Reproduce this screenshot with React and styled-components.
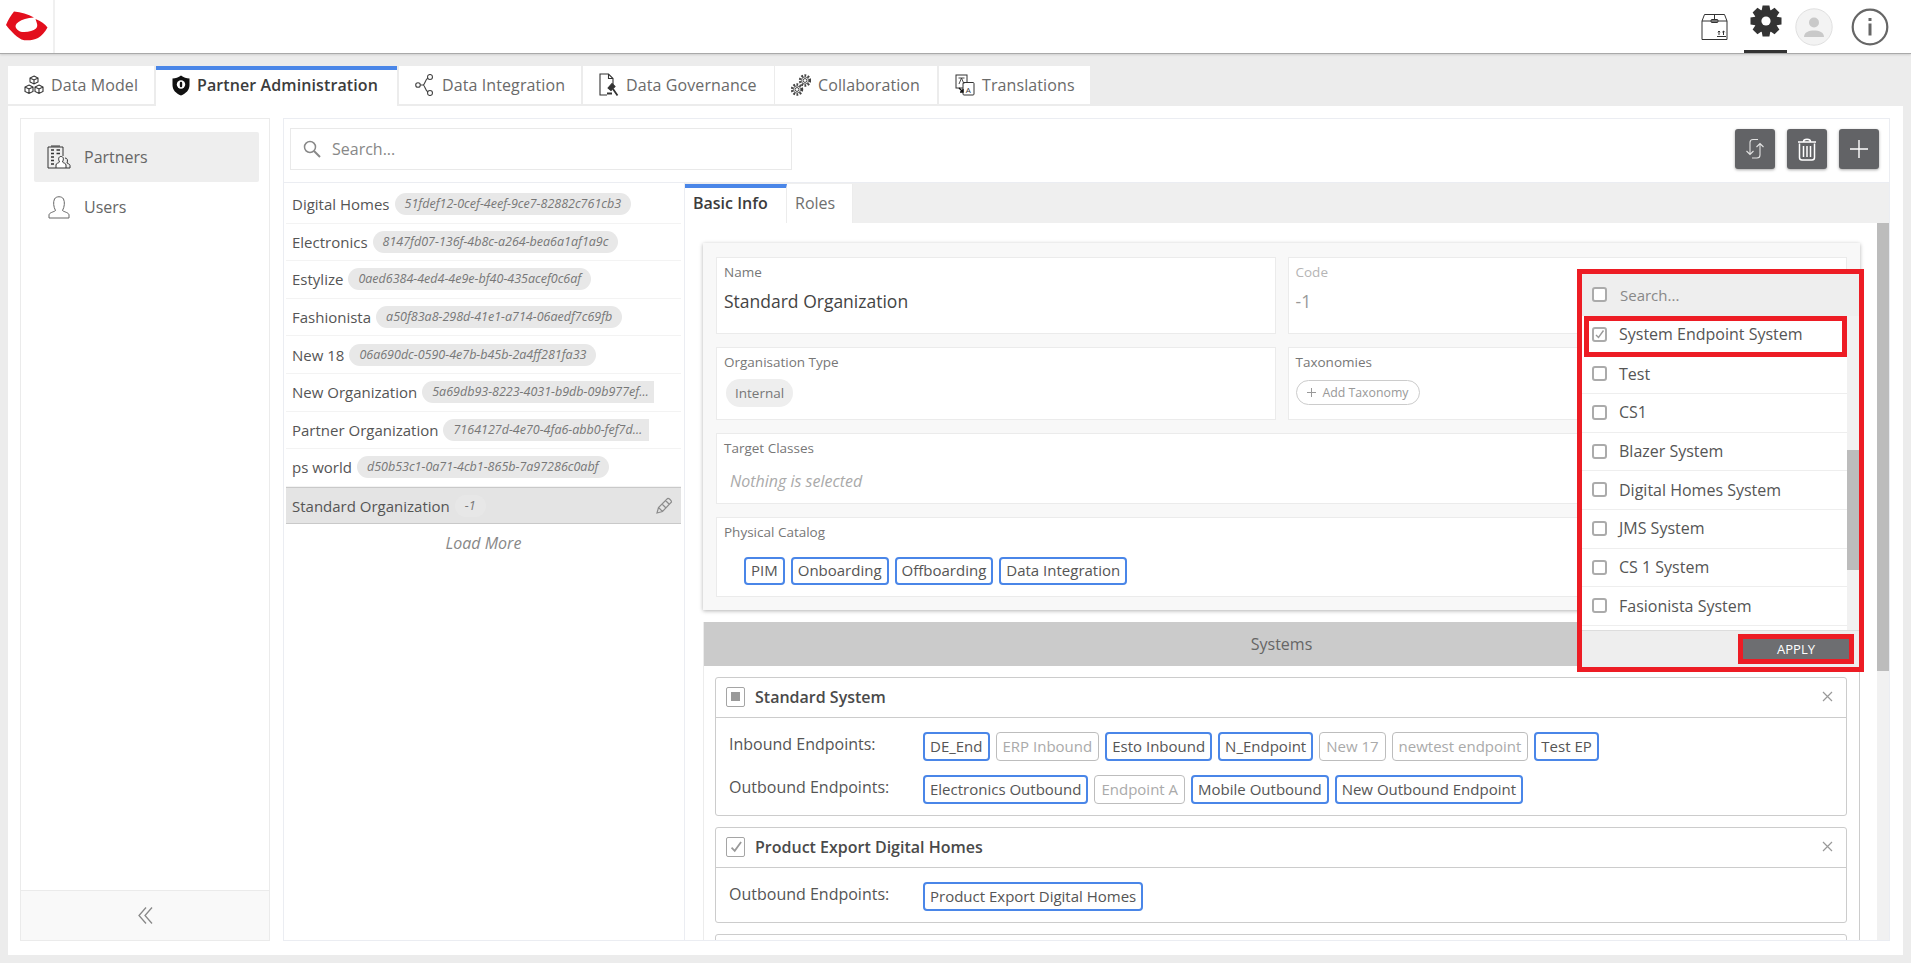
import React from "react";
import styled, { createGlobalStyle } from "styled-components";

const GlobalStyle = createGlobalStyle`
  html, body {
    margin: 0;
    padding: 0;
    background: #ececec;
    font-family: "Open Sans", "Liberation Sans", sans-serif;
    color: #555;
  }
  * { box-sizing: border-box; }
`;

const Page = styled.div`
  width: 1911px;
  height: 963px;
  overflow: hidden;
  display: flex;
  flex-direction: column;
`;

const TopBar = styled.header`
  height: 54px;
  flex: none;
  background: #fff;
  border-bottom: 1px solid #a9a9a9;
  box-shadow: 0 1px 2px rgba(0, 0, 0, 0.12);
  display: flex;
  align-items: stretch;
  padding-right: 22px;
`;

const LogoCell = styled.div`
  width: 55px;
  border-right: 2px solid #f0f0f0;
  display: flex;
  align-items: center;
`;

const TopIcons = styled.div`
  margin-left: auto;
  display: flex;
  align-items: center;
`;

const TopIcon = styled.div`
  margin-left: ${(p) => p.$ml || 0}px;
  display: flex;
  align-items: center;
  justify-content: center;
`;

const GearCell = styled(TopIcon)`
  width: 43px;
  height: 53px;
  padding-bottom: 8px;
  border-bottom: 3px solid #333;
`;

const TabStrip = styled.nav`
  display: flex;
  align-items: flex-start;
  height: 40px;
  margin-top: 12px;
  padding-left: 8px;
  flex: none;
`;

const Tab = styled.div`
  height: ${(p) => (p.$active ? 40 : 38)}px;
  width: ${(p) => p.$w}px;
  margin-right: ${(p) => p.$mr ?? 2}px;
  background: #fff;
  border-top: ${(p) => (p.$active ? "4px solid #4a86e8" : "none")};
  display: flex;
  align-items: center;
  gap: 7px;
  padding-left: 16px;
  padding-bottom: ${(p) => (p.$active ? 6 : 0)}px;
  font-size: 16px;
  letter-spacing: 0.1px;
  font-weight: ${(p) => (p.$active ? 600 : 400)};
  color: ${(p) => (p.$active ? "#3c3c3c" : "#6a6a6a")};
  white-space: nowrap;
`;

const Panel = styled.div`
  flex: 1;
  margin: 0 8px 8px;
  background: #fff;
  padding: 12px 13px 14px 12px;
  display: flex;
  gap: 13px;
  min-height: 0;
`;

const Sidebar = styled.aside`
  width: 250px;
  flex: none;
  border: 1px solid #ebebeb;
  display: flex;
  flex-direction: column;
`;

const SideNav = styled.div`
  flex: 1;
  padding: 13px 10px 0 13px;
`;

const SideItem = styled.div`
  height: 50px;
  display: flex;
  align-items: center;
  gap: 13px;
  padding-left: 13px;
  background: ${(p) => (p.$active ? "#eeeeee" : "transparent")};
  border-radius: 2px;
  font-size: 16px;
  color: #666;
`;

const SideIconBox = styled.span`
  width: 24px;
  display: flex;
  justify-content: center;
`;

const SideFoot = styled.div`
  height: 50px;
  background: #f9f9f9;
  border-top: 1px solid #ebebeb;
  display: flex;
  align-items: center;
  justify-content: center;
`;

const Main = styled.main`
  flex: 1;
  min-width: 0;
  border: 1px solid #ebedf2;
  display: flex;
  flex-direction: column;
`;

const Toolbar = styled.div`
  height: 64px;
  flex: none;
  display: flex;
  align-items: center;
  padding: 0 10px 3px 6px;
  border-bottom: 1px solid #ebedf2;
`;

const SearchBox = styled.div`
  width: 502px;
  height: 42px;
  border: 1px solid #e9e9e9;
  display: flex;
  align-items: center;
  gap: 11px;
  padding-left: 12px;
  font-size: 16px;
  color: #888;
`;

const ToolButtons = styled.div`
  margin-left: auto;
  display: flex;
  gap: 12px;
`;

const ToolButton = styled.div`
  width: 40px;
  height: 40px;
  background: #626366;
  border-radius: 3px;
  box-shadow: 0 1px 3px rgba(0, 0, 0, 0.35);
  display: flex;
  align-items: center;
  justify-content: center;
`;

const Body = styled.div`
  flex: 1;
  min-height: 0;
  display: flex;
`;

const ListCol = styled.div`
  width: 401px;
  flex: none;
  padding: 3px 3px 0 2px;
  border-right: 1px solid #ebedf2;
`;

const Row = styled.div`
  height: 37.6px;
  display: flex;
  align-items: center;
  gap: 5px;
  padding-left: 6px;
  padding-right: 8px;
  font-size: 15px;
  color: #555;
  white-space: nowrap;
  border-bottom: 1px solid #f3f3f3;
  background: ${(p) => (p.$active ? "#e4e4e4" : "#fff")};
  border-top: ${(p) => (p.$active ? "1px solid #c9c9c9" : "none")};
  border-bottom-color: ${(p) => (p.$active ? "#c9c9c9" : "#f3f3f3")};
`;

const IdPill = styled.span`
  max-width: ${(p) => p.$max || 400}px;
  height: 22px;
  line-height: 22px;
  padding: 0 ${(p) => (p.$cut ? 2 : 10)}px 0 10px;
  background: ${(p) => (p.$plain ? "#e7e7e7" : "#e8e8e8")};
  border-radius: ${(p) => (p.$cut ? "11px 0 0 11px" : "11px")};
  font-size: 12.5px;
  font-style: italic;
  color: #777;
  overflow: hidden;
  text-overflow: ellipsis;
`;

const EditIcon = styled.span`
  margin-left: auto;
  display: flex;
`;

const LoadMore = styled.div`
  text-align: center;
  font-size: 16px;
  font-style: italic;
  color: #888;
  padding-top: 8px;
`;

const Detail = styled.div`
  flex: 1;
  min-width: 0;
  position: relative;
  display: flex;
  flex-direction: column;
`;

const DetailTabs = styled.div`
  height: 40px;
  flex: none;
  background: #efefef;
  display: flex;
  align-items: flex-start;
  padding-top: 1px;
`;

const DetailTab = styled.div`
  height: 39px;
  background: #fff;
  border-top: ${(p) => (p.$active ? "4px solid #4a86e8" : "none")};
  border-right: 1px solid #ececec;
  width: ${(p) => p.$w}px;
  display: flex;
  align-items: center;
  padding-left: 8px;
  padding-bottom: ${(p) => (p.$active ? 6 : 2)}px;
  font-size: 16px;
  font-weight: ${(p) => (p.$active ? 600 : 400)};
  color: ${(p) => (p.$active ? "#3c3c3c" : "#6f6f6f")};
`;

const ScrollArea = styled.div`
  flex: 1;
  min-height: 0;
  display: flex;
  overflow: hidden;
`;

const Content = styled.div`
  flex: 1;
  min-width: 0;
  padding: 20px 17px 0 18px;
`;

const Track = styled.div`
  width: 12px;
  flex: none;
  background: #f1f1f1;
`;

const Thumb = styled.div`
  height: ${(p) => p.$h}px;
  margin-top: ${(p) => p.$top || 0}px;
  background: #bcbcbc;
`;

const InfoCard = styled.section`
  background: #f8f8f8;
  box-shadow: 0 1px 4px rgba(0, 0, 0, 0.3);
  padding: 14px 13px 13px;
  display: grid;
  grid-template-columns: 1fr 1fr;
  gap: 13px 12px;
`;

const Field = styled.div`
  height: ${(p) => p.$h}px;
  grid-column: ${(p) => (p.$wide ? "1 / 3" : "auto")};
  background: #fff;
  border: 1px solid #ebebeb;
  padding: 3.5px 7px 0;
`;

const FieldLabel = styled.div`
  font-size: 13.5px;
  line-height: 20px;
  color: ${(p) => (p.$muted ? "#b5b5b5" : "#777")};
`;

const FieldValue = styled.div`
  font-size: 17.5px;
  line-height: 24px;
  margin-top: 7px;
  color: ${(p) => (p.$muted ? "#999" : "#444")};
`;

const Placeholder = styled.div`
  font-size: 16px;
  line-height: 22px;
  font-style: italic;
  color: #aaa;
  margin: 12px 0 0 6px;
`;

const TypePill = styled.span`
  display: inline-flex;
  align-items: center;
  height: 28px;
  margin: 7px 0 0 2px;
  padding: 0 9px;
  background: #eeeeee;
  border-radius: 14px;
  font-size: 13.5px;
  color: #777;
`;

const AddPill = styled.span`
  display: inline-flex;
  align-items: center;
  gap: 6px;
  height: 25px;
  margin-top: 8px;
  padding: 0 11px 0 9px;
  border: 1px solid #ccc;
  border-radius: 13px;
  font-size: 12.3px;
  color: #999;
`;

const ChipRow = styled.div`
  display: flex;
  gap: 6px;
  padding-left: ${(p) => p.$pl || 0}px;
  margin-top: ${(p) => p.$mt || 0}px;
`;

const Chip = styled.span`
  height: ${(p) => p.$h || 29}px;
  display: flex;
  align-items: center;
  white-space: nowrap;
  border-radius: 4px;
  border: ${(p) => (p.$off ? "1px solid #bdbdbd" : "2px solid #4a86e8")};
  padding: 0 ${(p) => (p.$off ? 6 : 5)}px 1px;
  font-size: 15px;
  background: #fff;
  color: ${(p) => (p.$off ? "#aaa" : "#555")};
`;

const Systems = styled.section`
  margin-top: 12px;
  padding-bottom: 11px;
  background: #fff;
  border-right: 1px solid #ccc;
  border-left: 1px solid #ececec;
`;

const SystemsHead = styled.div`
  height: 44px;
  display: flex;
  align-items: center;
  justify-content: center;
  background: #cbcbcb;
  font-size: 16px;
  color: #666;
`;

const SystemCard = styled.div`
  margin: 11px 12px 0 11px;
  border: 1px solid #ccc;
  border-radius: 3px;
`;

const CardHead = styled.div`
  height: 40px;
  display: flex;
  align-items: center;
  gap: 10px;
  padding: 0 13px 2px 10px;
  border-bottom: 1px solid #ccc;
  font-size: 16px;
  font-weight: 600;
  color: #4a4a4a;
`;

const BoxIcon = styled.span`
  width: 19px;
  height: 20px;
  flex: none;
  border: 1px solid #a5a5a5;
  border-radius: 2px;
  display: flex;
  align-items: center;
  justify-content: center;
`;

const Solid = styled.span`
  width: 9px;
  height: 9px;
  background: #9a9a9a;
`;

const CloseMark = styled.span`
  margin-left: auto;
  display: flex;
`;

const CardBody = styled.div`
  padding: 14px 13px 11px;
  display: flex;
  flex-direction: column;
  gap: 14px;
`;

const EndpointRow = styled.div`
  display: flex;
  align-items: flex-start;
`;

const EndpointLabel = styled.div`
  width: 194px;
  flex: none;
  font-size: 16px;
  line-height: 24px;
  color: #555;
`;

const Picker = styled.div`
  position: absolute;
  left: 892px;
  top: 86px;
  width: 287px;
  height: 403px;
  border: 5px solid #ed1c24;
  background: #fff;
  display: flex;
  flex-direction: column;
  z-index: 2;
`;

const PickerSearch = styled.div`
  height: 42px;
  flex: none;
  background: #eeeeee;
  display: flex;
  align-items: center;
  gap: 13px;
  padding: 0 0 1px 10px;
  font-size: 15px;
  color: #888;
`;

const PickerBody = styled.div`
  flex: 1;
  min-height: 0;
  display: flex;
`;

const PickerList = styled.div`
  flex: 1;
  min-width: 0;
  overflow: hidden;
`;

const PickerRow = styled.div`
  height: ${(p) => (p.$picked ? 41 : 38.7)}px;
  display: flex;
  align-items: center;
  gap: 12px;
  font-size: 16px;
  color: #555;
  white-space: nowrap;
  ${(p) =>
    p.$picked
      ? `
    border: 5px solid #ed1c24;
    margin-left: 2px;
    padding: 0 0 5px 3px;
  `
      : `
    padding: 0 0 1px 10px;
    border-bottom: 1px solid #eeeeee;
  `}
  &:nth-child(2) {
    height: 37px;
    padding-bottom: 3px;
  }
`;

const Check = styled.span`
  width: 15px;
  height: 15px;
  flex: none;
  border: 2px solid #ababab;
  border-radius: 3px;
  background: #fff;
  display: flex;
  align-items: center;
  justify-content: center;
`;

const PickerFoot = styled.div`
  height: 37px;
  flex: none;
  background: #eeeeee;
  border-top: 1px solid #ddd;
  display: flex;
  align-items: center;
  justify-content: flex-end;
  padding-right: 5px;
`;

const ApplyButton = styled.div`
  width: 116px;
  height: 30px;
  border: 5px solid #ed1c24;
  background: #6d6e71;
  color: #fff;
  font-size: 13px;
  display: flex;
  align-items: center;
  justify-content: center;
`;

const Logo = () => (
  <svg width="53" height="53" viewBox="0 0 53 53">
    <path
      d="M14 11.5 C 21 12 28 14 34 17.5 C 27 18 22 19.5 18.5 22 C 15.5 24 15 26 16 28 C 17.5 30 19 31.5 22 32 C 28 32.5 33 31 36 28.5 C 37.5 27 37.5 25 36.8 23 L 35.5 19 C 41 21 45 24 47.5 27.5 C 45 32 42 35.5 38 38 C 33 40.5 26 41 21.5 39.5 C 15 36 10 30 6 25 C 8 20 11 15 14 11.5 Z"
      fill="#e30f1d"
    />
  </svg>
);

const BoxGlyph = () => (
  <svg width="27" height="28" viewBox="0 0 27 28" fill="none" stroke="#333" strokeWidth="1">
    <path d="M1 8 L3.5 1.5 H23.5 L26 8 V26.5 H1 Z M1 8 H26 M13.5 1.5 V8" />
    <rect x="10" y="6.5" width="7" height="3" rx="1" fill="#777" />
    <path d="M16 23.5 H25 M18 22 V18 M16.8 19.2 L18 18 L19.2 19.2 M22.5 22 V18 M21.3 19.2 L22.5 18 L23.7 19.2" />
  </svg>
);

// 8 wide teeth round a solid wheel
const GearGlyph = () => (
  <svg width="32" height="32" viewBox="0 0 32 32" fill="#333">
    <circle cx="16" cy="16" r="11.5" />
    {[0, 45, 90, 135, 180, 225, 270, 315].map((deg) => (
      <path key={deg} d="M12.6 0.5 H19.4 L20.6 7 H11.4 Z" transform={`rotate(${deg} 16 16)`} />
    ))}
    <circle cx="16" cy="16" r="4.6" fill="#fff" />
  </svg>
);

const Avatar = () => (
  <svg width="38" height="38" viewBox="0 0 38 38">
    <circle cx="19" cy="19" r="18.2" fill="#f3f3f3" stroke="#e0e0e0" />
    <circle cx="19" cy="14.5" r="5" fill="#c9c9c9" />
    <path d="M9 29 C 9 24 14 22.5 19 22.5 C 24 22.5 29 24 29 29 Z" fill="#c9c9c9" />
  </svg>
);

const InfoGlyph = () => (
  <svg width="38" height="38" viewBox="0 0 38 38">
    <circle cx="19" cy="19" r="17.3" fill="none" stroke="#666" strokeWidth="2.2" />
    <rect x="17.5" y="10" width="3" height="3" fill="#666" />
    <rect x="17.5" y="15.5" width="3" height="12" fill="#666" />
  </svg>
);

const ModelIcon = () => (
  <svg width="20" height="20" viewBox="0 0 20 20" fill="none" stroke="#333" strokeWidth="1.1">
    <path d="M10 1 L14 3 V7 L10 9 L6 7 V3 Z M6 3 L10 5 L14 3 M10 5 V9" />
    <path d="M5 10 L9 12 V16.5 L5 18.5 L1 16.5 V12 Z M1 12 L5 14 L9 12 M5 14 V18.5" />
    <path d="M15 10 L19 12 V16.5 L15 18.5 L11 16.5 V12 Z M11 12 L15 14 L19 12 M15 14 V18.5" />
  </svg>
);

const ShieldIcon = () => (
  <svg width="18" height="21" viewBox="0 0 18 21">
    <path d="M9 0.5 C 11.5 2.5 14.5 3.2 17.5 3.5 V10 C 17.5 15 14 18.5 9 20.5 C 4 18.5 0.5 15 0.5 10 V3.5 C 3.5 3.2 6.5 2.5 9 0.5 Z" fill="#111" />
    <circle cx="9" cy="9.5" r="4.2" fill="#fff" />
    <rect x="7.8" y="6.8" width="2.4" height="5.4" rx="1.2" fill="#111" />
  </svg>
);

const NodesIcon = () => (
  <svg width="20" height="22" viewBox="0 0 20 22" fill="none" stroke="#444" strokeWidth="1.1">
    <circle cx="3" cy="11" r="2.3" />
    <circle cx="15" cy="3" r="2.5" />
    <circle cx="15" cy="19" r="2.5" />
    <path d="M5.3 11 H8 C 10 11 10 5.5 13 4 M8 11 C 10 11 10 16.5 13 18" />
  </svg>
);

const GovernIcon = () => (
  <svg width="20" height="24" viewBox="0 0 20 24" fill="none" stroke="#333" strokeWidth="1.1">
    <path d="M14 13 V5.5 L9.5 1 H1 V22 H8 M9.5 1 V5.5 H14" />
    <path d="M9 15 L13 10.5 L16 13.5 L12 17.5 Z" fill="#333" />
    <path d="M14 16 L18.5 22.5 M8 20.5 H13" strokeWidth="1.8" />
  </svg>
);

const GearOutline = ({ cx, cy, r }) => (
  <g fill="none" stroke="#444">
    <circle cx={cx} cy={cy} r={r} strokeWidth="2.4" strokeDasharray="1.8 1.4" />
    <circle cx={cx} cy={cy} r={r - 1.4} strokeWidth="0.8" />
    <circle cx={cx} cy={cy} r={r / 2.6} strokeWidth="1" />
  </g>
);

const CollabIcon = () => (
  <svg width="20" height="22" viewBox="0 0 20 22">
    <GearOutline cx={6} cy={15.5} r={5} />
    <GearOutline cx={14} cy={6.5} r={5} />
  </svg>
);

const TranslateIcon = () => (
  <svg width="20" height="22" viewBox="0 0 20 22" fill="none" stroke="#333" strokeWidth="1">
    <rect x="1" y="1" width="11" height="13" fill="#fff" />
    <rect x="8" y="8.5" width="11" height="12.5" rx="1" fill="#fff" />
    <path d="M3.5 4 H9.5 M6.5 4 L4 10 M6.5 4 L9 10" strokeWidth="0.9" />
    <path d="M4 14 L8 18 M8 15 V18 H5" stroke="#111" strokeWidth="1.3" />
    <text x="10.7" y="18.5" fontSize="8" fontFamily="Open Sans" fill="#333" stroke="none">A</text>
  </svg>
);

const PartnersIcon = () => (
  <svg width="24" height="24" viewBox="0 0 24 24" fill="none" stroke="#333" strokeWidth="1">
    <path d="M1 23 V2 H16 V11 M4 1 H13 M1 23 H9" />
    <path d="M4 5 H7 M9.5 5 H13 M4 8.5 H7 M9.5 8.5 H13 M4 12 H7 M4 15.5 H7 M4 19 H7" strokeWidth="1.4" />
    <path d="M9 23 V20 C 9 18 12 18 12.5 17 C 11 14 11.5 11.5 14 11.5 C 16.5 11.5 17 14 15.5 17 C 16 18 19 18 19 20 V23 Z" fill="#fff" />
    <path d="M19 23 H23 V20.5 C 23 19 20.5 18.5 20 18 C 21 15.5 20.5 13 18 13" />
  </svg>
);

const UsersIcon = () => (
  <svg width="22" height="24" viewBox="0 0 22 24" fill="none" stroke="#666" strokeWidth="1">
    <path d="M1 23 V20 C 1 17.5 6 17 7.5 15.5 C 5.5 12 5 7 6.5 4 C 8 1 14 1 15.5 4 C 17 7 16.5 12 14.5 15.5 C 16 17 21 17.5 21 20 V23 Z" />
  </svg>
);

const SearchGlyph = ({ color = "#888" }) => (
  <svg width="18" height="18" viewBox="0 0 18 18" fill="none" stroke={color} strokeWidth="1.5">
    <circle cx="7" cy="7" r="5.5" />
    <path d="M11 11 L17 17" strokeWidth="2" />
  </svg>
);

const SwapGlyph = () => (
  <svg width="40" height="40" viewBox="0 0 40 40" fill="none" stroke="#e2e2e2" strokeWidth="1.1">
    <path d="M23 10.5 H18 C 16 10.5 15 11.5 15 13.5 V25.5 M11.5 22 L15 25.5 L18.5 22" />
    <path d="M17 29 H22 C 24 29 25 28 25 26 V14.5 M21.5 18 L25 14.5 L28.5 18" />
  </svg>
);

const TrashGlyph = () => (
  <svg width="20" height="24" viewBox="0 0 20 24" fill="none" stroke="#fff" strokeWidth="1.5">
    <path d="M1 5 H19 M6.5 4.5 C 6.5 1.5 13.5 1.5 13.5 4.5" />
    <path d="M2.5 6.5 V20.5 C 2.5 22 3.5 23 5 23 H15 C 16.5 23 17.5 22 17.5 20.5 V6.5" />
    <path d="M6.5 9 V20 M10 9 V20 M13.5 9 V20" />
  </svg>
);

const PlusGlyph = () => (
  <svg width="20" height="20" viewBox="0 0 20 20" stroke="#fff" strokeWidth="1.4">
    <path d="M10 1 V19 M1 10 H19" />
  </svg>
);

const PencilGlyph = () => (
  <svg width="17" height="17" viewBox="0 0 17 17" fill="none" stroke="#8c8c8c" strokeWidth="1.2">
    <path d="M1 16 L2.5 10.5 L11.5 1.5 C 13 1 15.5 3.5 15.5 5 L6.5 14.5 Z M2.5 10.5 L6.5 14.5 M9.5 3.5 L13.5 7.5 M6 7 L10 11" />
  </svg>
);

const Chevrons = () => (
  <svg width="15" height="17" viewBox="0 0 15 17" fill="none" stroke="#888" strokeWidth="1.3">
    <path d="M8 0.5 L1 8.5 L8 16.5 M14 0.5 L7 8.5 L14 16.5" />
  </svg>
);

const Cross = () => (
  <svg width="11" height="11" viewBox="0 0 11 11" stroke="#999" strokeWidth="1.2">
    <path d="M1 1 L10 10 M10 1 L1 10" />
  </svg>
);

const Tick = ({ size = 11 }) => (
  <svg width={size} height={size} viewBox="0 0 11 11" fill="none" stroke="#999" strokeWidth="1.4">
    <path d="M2 6 L4.5 8.5 L9.5 1.5" />
  </svg>
);

const tabs = [
  { label: "Data Model", icon: <ModelIcon />, w: 146 },
  { label: "Partner Administration", icon: <ShieldIcon />, w: 241, active: true },
  { label: "Data Integration", icon: <NodesIcon />, w: 182 },
  { label: "Data Governance", icon: <GovernIcon />, w: 191, mr: 1 },
  { label: "Collaboration", icon: <CollabIcon />, w: 162 },
  { label: "Translations", icon: <TranslateIcon />, w: 151 },
];

const partners = [
  { name: "Digital Homes", id: "51fdef12-0cef-4eef-9ce7-82882c761cb3" },
  { name: "Electronics", id: "8147fd07-136f-4b8c-a264-bea6a1af1a9c" },
  { name: "Estylize", id: "0aed6384-4ed4-4e9e-bf40-435acef0c6af" },
  { name: "Fashionista", id: "a50f83a8-298d-41e1-a714-06aedf7c69fb" },
  { name: "New 18", id: "06a690dc-0590-4e7b-b45b-2a4ff281fa33" },
  { name: "New Organization", id: "5a69db93-8223-4031-b9db-09b977ef4d21", max: 232 },
  { name: "Partner Organization", id: "7164127d-4e70-4fa6-abb0-fef7d8a1c3e2", max: 206 },
  { name: "ps world", id: "d50b53c1-0a71-4cb1-865b-7a97286c0abf" },
];

const pickerItems = ["Test", "CS1", "Blazer System", "Digital Homes System", "JMS System", "CS 1 System", "Fasionista System"];

const inbound = [
  ["DE_End"],
  ["ERP Inbound", true],
  ["Esto Inbound"],
  ["N_Endpoint"],
  ["New 17", true],
  ["newtest endpoint", true],
  ["Test EP"],
];

const outbound = [
  ["Electronics Outbound"],
  ["Endpoint A", true],
  ["Mobile Outbound"],
  ["New Outbound Endpoint"],
];

const App = () => (
  <Page>
    <GlobalStyle />
    <TopBar>
      <LogoCell>
        <Logo />
      </LogoCell>
      <TopIcons>
        <TopIcon>
          <BoxGlyph />
        </TopIcon>
        <GearCell $ml={16}>
          <GearGlyph />
        </GearCell>
        <TopIcon $ml={8}>
          <Avatar />
        </TopIcon>
        <TopIcon $ml={18}>
          <InfoGlyph />
        </TopIcon>
      </TopIcons>
    </TopBar>

    <TabStrip>
      {tabs.map((t) => (
        <Tab key={t.label} $active={t.active} $w={t.w} $mr={t.mr}>
          {t.icon}
          {t.label}
        </Tab>
      ))}
    </TabStrip>

    <Panel>
      <Sidebar>
        <SideNav>
          <SideItem $active>
            <SideIconBox>
              <PartnersIcon />
            </SideIconBox>
            Partners
          </SideItem>
          <SideItem>
            <SideIconBox>
              <UsersIcon />
            </SideIconBox>
            Users
          </SideItem>
        </SideNav>
        <SideFoot>
          <Chevrons />
        </SideFoot>
      </Sidebar>

      <Main>
        <Toolbar>
          <SearchBox>
            <SearchGlyph />
            Search...
          </SearchBox>
          <ToolButtons>
            <ToolButton>
              <SwapGlyph />
            </ToolButton>
            <ToolButton>
              <TrashGlyph />
            </ToolButton>
            <ToolButton>
              <PlusGlyph />
            </ToolButton>
          </ToolButtons>
        </Toolbar>

        <Body>
          <ListCol>
            {partners.map((p) => (
              <Row key={p.name}>
                {p.name}
                <IdPill $max={p.max} $cut={!!p.max}>
                  {p.id}
                </IdPill>
              </Row>
            ))}
            <Row $active>
              Standard Organization
              <IdPill $plain>-1</IdPill>
              <EditIcon>
                <PencilGlyph />
              </EditIcon>
            </Row>
            <LoadMore>Load More</LoadMore>
          </ListCol>

          <Detail>
            <DetailTabs>
              <DetailTab $active $w={102}>
                Basic Info
              </DetailTab>
              <DetailTab $w={66}>Roles</DetailTab>
            </DetailTabs>

            <ScrollArea>
              <Content>
                <InfoCard>
                  <Field $h={77}>
                    <FieldLabel>Name</FieldLabel>
                    <FieldValue>Standard Organization</FieldValue>
                  </Field>
                  <Field $h={77}>
                    <FieldLabel $muted>Code</FieldLabel>
                    <FieldValue $muted>-1</FieldValue>
                  </Field>
                  <Field $h={73}>
                    <FieldLabel>Organisation Type</FieldLabel>
                    <TypePill>Internal</TypePill>
                  </Field>
                  <Field $h={73}>
                    <FieldLabel>Taxonomies</FieldLabel>
                    <AddPill>
                      <svg width="11" height="11" viewBox="0 0 11 11" stroke="#999">
                        <path d="M5.5 1 V10 M1 5.5 H10" />
                      </svg>
                      Add Taxonomy
                    </AddPill>
                  </Field>
                  <Field $h={71} $wide>
                    <FieldLabel>Target Classes</FieldLabel>
                    <Placeholder>Nothing is selected</Placeholder>
                  </Field>
                  <Field $h={80} $wide>
                    <FieldLabel>Physical Catalog</FieldLabel>
                    <ChipRow $pl={20} $mt={15}>
                      <Chip $h={28}>PIM</Chip>
                      <Chip $h={28}>Onboarding</Chip>
                      <Chip $h={28}>Offboarding</Chip>
                      <Chip $h={28}>Data Integration</Chip>
                    </ChipRow>
                  </Field>
                </InfoCard>

                <Systems>
                  <SystemsHead>Systems</SystemsHead>
                  <SystemCard>
                    <CardHead>
                      <BoxIcon>
                        <Solid />
                      </BoxIcon>
                      Standard System
                      <CloseMark>
                        <Cross />
                      </CloseMark>
                    </CardHead>
                    <CardBody>
                      <EndpointRow>
                        <EndpointLabel>Inbound Endpoints:</EndpointLabel>
                        <ChipRow>
                          {inbound.map(([name, off]) => (
                            <Chip key={name} $off={off}>
                              {name}
                            </Chip>
                          ))}
                        </ChipRow>
                      </EndpointRow>
                      <EndpointRow>
                        <EndpointLabel>Outbound Endpoints:</EndpointLabel>
                        <ChipRow>
                          {outbound.map(([name, off]) => (
                            <Chip key={name} $off={off}>
                              {name}
                            </Chip>
                          ))}
                        </ChipRow>
                      </EndpointRow>
                    </CardBody>
                  </SystemCard>

                  <SystemCard>
                    <CardHead>
                      <BoxIcon>
                        <Tick size={14} />
                      </BoxIcon>
                      Product Export Digital Homes
                      <CloseMark>
                        <Cross />
                      </CloseMark>
                    </CardHead>
                    <CardBody>
                      <EndpointRow>
                        <EndpointLabel>Outbound Endpoints:</EndpointLabel>
                        <Chip>Product Export Digital Homes</Chip>
                      </EndpointRow>
                    </CardBody>
                  </SystemCard>

                  <SystemCard>
                    <CardHead />
                  </SystemCard>
                </Systems>
              </Content>

              <Track>
                <Thumb $h={448} />
              </Track>
            </ScrollArea>

            <Picker>
              <PickerSearch>
                <Check />
                Search...
              </PickerSearch>
              <PickerBody>
                <PickerList>
                  <PickerRow $picked>
                    <Check>
                      <Tick />
                    </Check>
                    System Endpoint System
                  </PickerRow>
                  {pickerItems.map((item) => (
                    <PickerRow key={item}>
                      <Check />
                      {item}
                    </PickerRow>
                  ))}
                </PickerList>
                <Track>
                  <Thumb $top={134} $h={120} />
                </Track>
              </PickerBody>
              <PickerFoot>
                <ApplyButton>APPLY</ApplyButton>
              </PickerFoot>
            </Picker>
          </Detail>
        </Body>
      </Main>
    </Panel>
  </Page>
);

export default App;
